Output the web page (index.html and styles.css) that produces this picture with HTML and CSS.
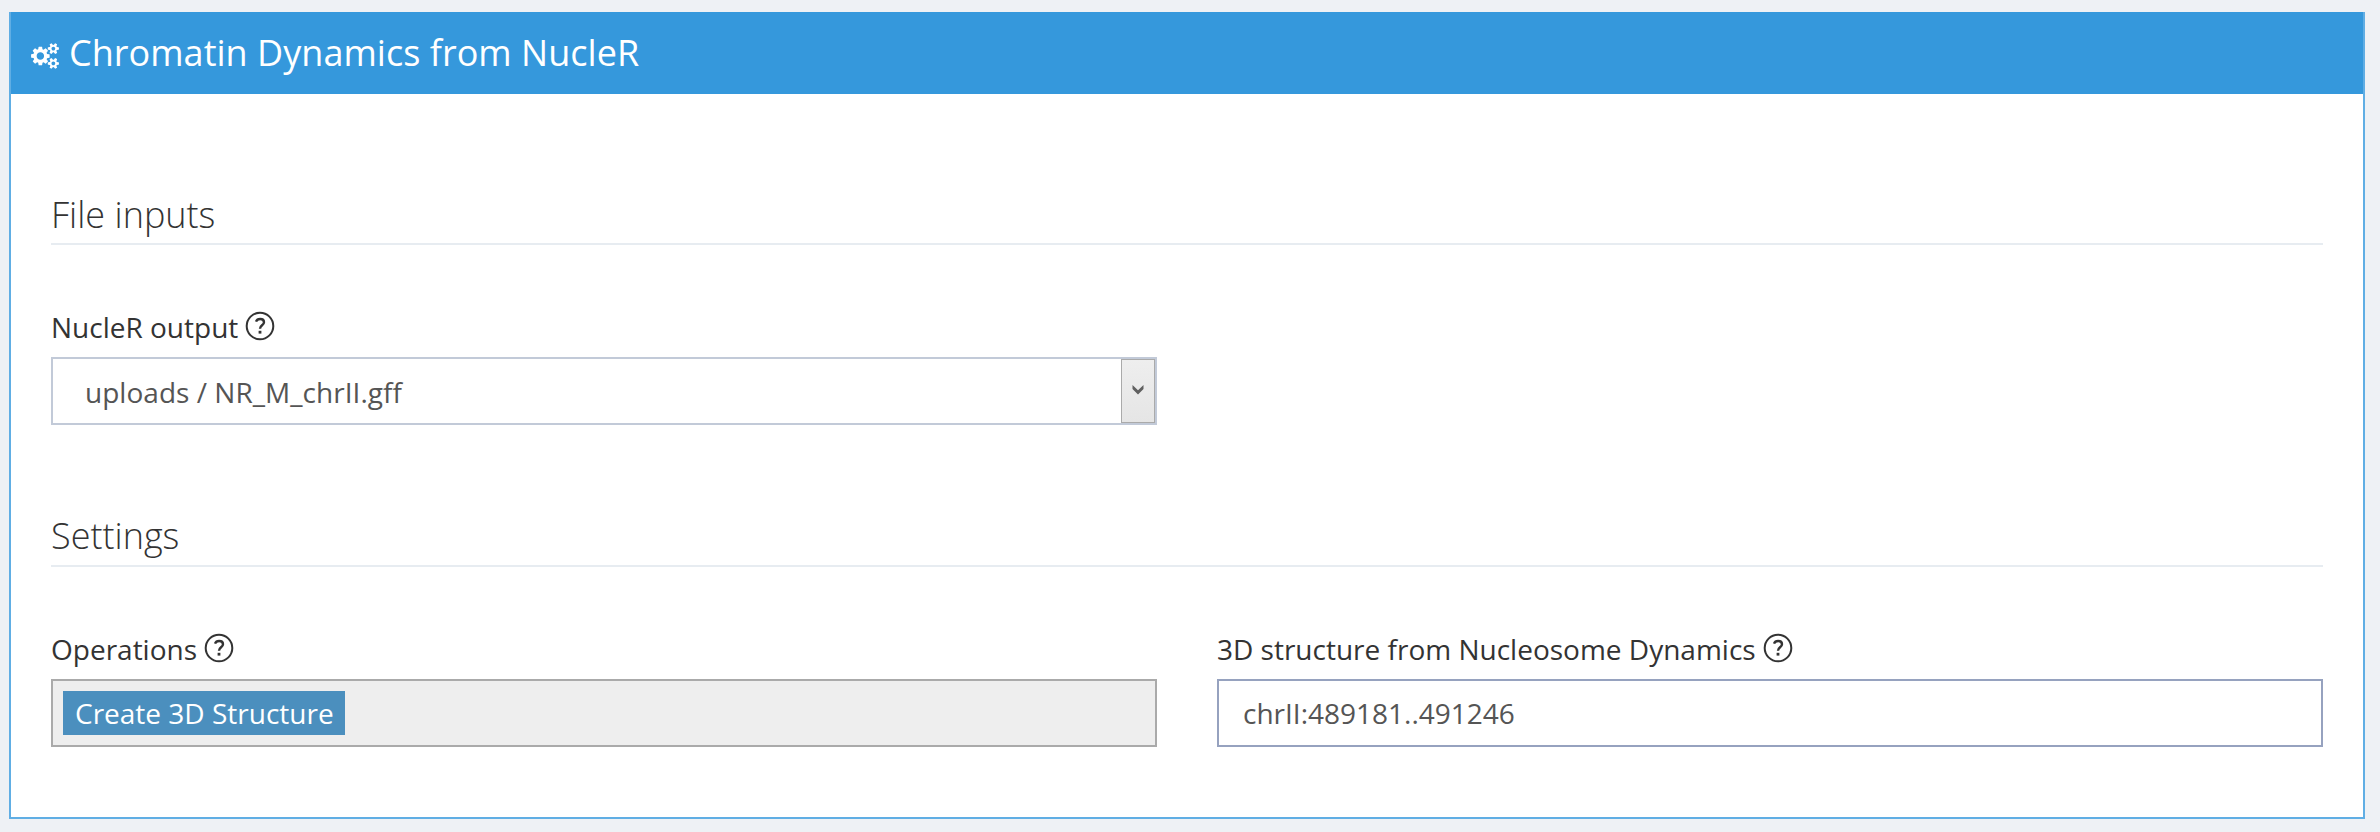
FILE: index.html
```html
<!DOCTYPE html>
<html lang="en">
<head>
<meta charset="utf-8">
<title>Chromatin Dynamics from NucleR</title>
<link rel="stylesheet" href="styles.css">
</head>
<body>
<svg width="0" height="0" class="defs">
  <symbol id="help" viewBox="0 0 30 30">
    <circle cx="15" cy="15" r="13.3" fill="none" stroke="currentColor" stroke-width="2"/>
    <path d="M11 10.6C11.7 8.8 13.3 8 15.1 8c2.300 0 3.900 1.200 3.900 3.200 0 3.100-4 3.100-4 6.500" fill="none" stroke="currentColor" stroke-width="2.400"/>
    <rect x="13.600" y="19.800" width="2.800" height="2.800" fill="currentColor"/>
  </symbol>
</svg>
<main class="portlet">
  <header class="portlet-title">
    <svg class="cogs" viewBox="0 0 1920 1792"><path fill="currentColor" d="M896 896q0-106-75-181t-181-75-181 75-75 181 75 181 181 75 181-75 75-181zm768 512q0-52-38-90t-90-38-90 38-38 90q0 53 37.500 90.500t90.500 37.500 90.500-37.500 37.500-90.500zm0-1024q0-52-38-90t-90-38-90 38-38 90q0 53 37.500 90.500t90.500 37.500 90.500-37.500 37.500-90.500zm-384 421v185q0 10-7 19.500t-16 10.500l-155 24q-11 35-32 76 34 48 90 115 7 11 7 20 0 12-7 19-23 30-82.500 89.500t-78.500 59.500q-11 0-21-7l-115-90q-37 19-77 31-11 108-23 155-7 24-30 24h-186q-11 0-20-7.500t-10-17.500l-23-153q-34-10-75-31l-118 89q-7 7-20 7-11 0-21-8-144-133-144-160 0-9 7-19 10-14 41-53t47-61q-23-44-35-82l-152-24q-10-1-17-9.500t-7-19.500v-185q0-10 7-19.500t16-10.500l155-24q11-35 32-76-34-48-90-115-7-11-7-20 0-12 7-20 22-30 82-89t79-59q11 0 21 7l115 90q34-18 77-32 11-108 23-154 7-24 30-24h186q11 0 20 7.500t10 17.500l23 153q34 10 75 31l118-89q8-7 20-7 11 0 21 8 144 133 144 160 0 8-7 19-12 16-42 54t-45 60q23 48 34 82l152 23q10 2 17 10.500t7 19.500zm640 533v140q0 16-149 31-12 27-30 52 51 113 51 138 0 4-4 7-122 71-124 71-8 0-46-47t-52-68q-20 2-30 2t-30-2q-14 21-52 68t-46 47q-2 0-124-71-4-3-4-7 0-25 51-138-18-25-30-52-149-15-149-31v-140q0-16 149-31 13-29 30-52-51-113-51-138 0-4 4-7 4-2 35-20t59-34 30-16q8 0 46 46.500t52 67.500q20-2 30-2t30 2q51-71 92-112l6-2q4 0 124 70 4 3 4 7 0 25-51 138 17 23 30 52 149 15 149 31zm0-1024v140q0 16-149 31-12 27-30 52 51 113 51 138 0 4-4 7-122 71-124 71-8 0-46-47t-52-68q-20 2-30 2t-30-2q-14 21-52 68t-46 47q-2 0-124-71-4-3-4-7 0-25 51-138-18-25-30-52-149-15-149-31v-140q0-16 149-31 13-29 30-52-51-113-51-138 0-4 4-7 4-2 35-20t59-34 30-16q8 0 46 46.500t52 67.500q20-2 30-2t30 2q51-71 92-112l6-2q4 0 124 70 4 3 4 7 0 25-51 138 17 23 30 52 149 15 149 31z"/></svg>
    <span>Chromatin Dynamics from NucleR</span>
  </header>
  <div class="portlet-body">
    <section>
      <h3 class="form-section">File inputs</h3>
      <div class="row">
        <div class="field">
          <div class="label">NucleR output<svg class="help"><use href="#help"/></svg></div>
          <div class="control select">
            <span class="value">uploads / NR_M_chrII.gff</span>
            <span class="arrow"><svg width="12" height="10" viewBox="0 0 12 10"><path d="M.5 0L6 5.300 11.500 0V4L6 9.500.5 4z" fill="#606060"/></svg></span>
          </div>
        </div>
      </div>
    </section>
    <section class="settings">
      <h3 class="form-section">Settings</h3>
      <div class="row">
        <div class="field">
          <div class="label">Operations<svg class="help"><use href="#help"/></svg></div>
          <div class="control tags"><span class="tag">Create 3D Structure</span></div>
        </div>
        <div class="field">
          <div class="label">3D structure from Nucleosome Dynamics<svg class="help"><use href="#help"/></svg></div>
          <div class="control text">chrII:489181..491246</div>
        </div>
      </div>
    </section>
  </div>
</main>
</body>
</html>
```
FILE: styles.css
```css
* { box-sizing: border-box; }
body {
  margin: 0;
  padding: 12px 15px 13px 9px;
  height: 832px;
  background: #eef1f5;
  color: #333;
  font-family: "Open Sans", sans-serif;
  font-size: 28px;
  line-height: 40px;
}
.defs { display: none; }
.portlet {
  height: 807px;
  background: #fff;
  border: 2px solid #60aee4;
  border-top: 0;
}
.portlet-title {
  display: flex;
  align-items: center;
  height: 82px;
  padding-left: 20px;
  background: #3598dc;
  color: #fff;
  font-size: 36px;
  line-height: 48px;
}
.portlet-title span { margin-left: 10px; letter-spacing: .03px; }
.cogs { width: 28px; height: 26px; margin-top: 5px; }
.portlet-body { padding: 97px 40px 0; }
.form-section {
  margin: 0 0 62px;
  padding-bottom: 4px;
  border-bottom: 2px solid #e7ecf1;
  font-size: 36px;
  font-weight: 300;
  line-height: 48px;
}
.settings { margin-top: 87px; }
.settings .form-section { padding-bottom: 5px; }
.row { display: grid; grid-template-columns: 1fr 1fr; column-gap: 60px; }
.label { display: flex; height: 40px; margin-bottom: 10px; white-space: nowrap; }
.help { width: 30px; height: 30px; margin: 4px 0 0 7px; }
.control {
  display: flex;
  align-items: center;
  height: 68px;
  border: 2px solid #c2cad8;
  color: #555;
}
.select { justify-content: space-between; padding-left: 32px; }
.value { padding-top: 2px; letter-spacing: .03px; }
.arrow {
  display: flex;
  align-items: center;
  justify-content: center;
  width: 34px;
  height: 64px;
  padding-bottom: 2px;
  border: 1px solid #aaa;
  background: linear-gradient(#eee, #e5e5e5);
}
.tags { padding-left: 10px; border-color: #aaa; background: #eee; }
.tag {
  height: 44px;
  padding: 0 11px 0 12px;
  background: #4b8fbe;
  color: #fff;
  line-height: 45px;
}
.text { padding-left: 24px; border-color: #96a2bf; }
```
